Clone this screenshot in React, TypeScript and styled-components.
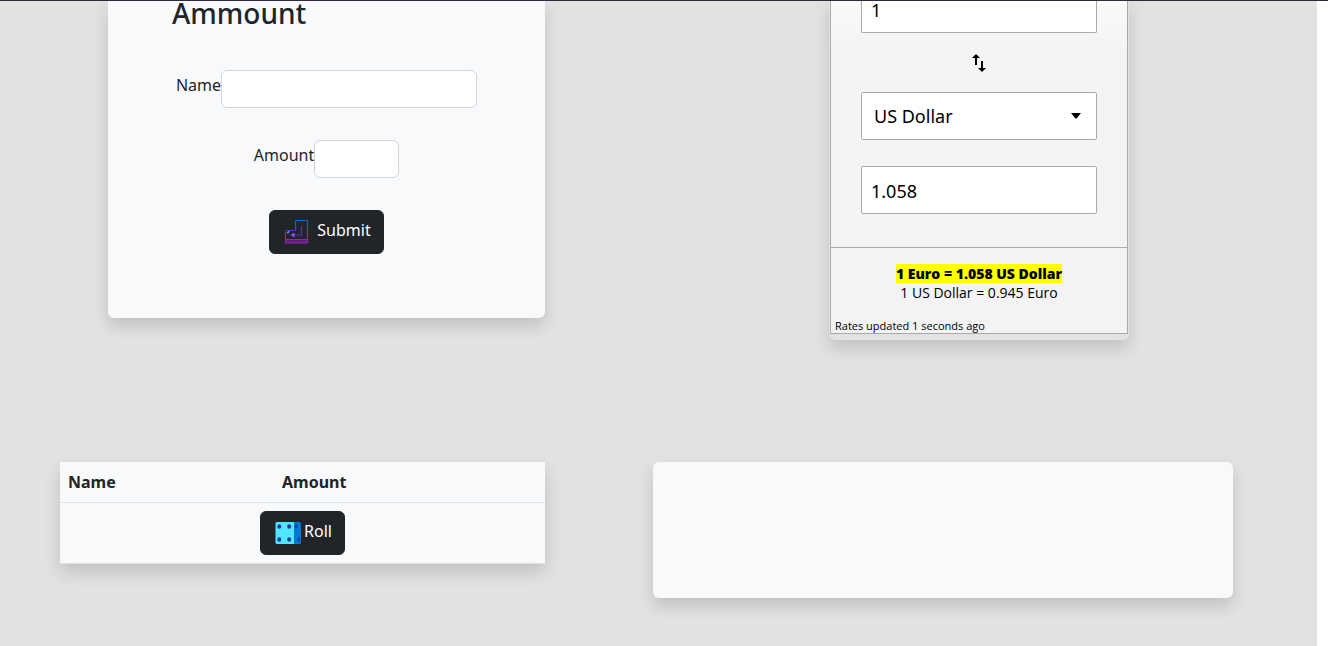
import React from "react";
import styled, { createGlobalStyle, css } from "styled-components";

const GlobalStyle = createGlobalStyle`
  *, *::before, *::after { box-sizing: border-box; }
  body {
    margin: 0;
    background: #fff;
    color: #212529;
    font-family: "Noto Sans", "Liberation Sans", sans-serif;
    font-size: 16px;
    line-height: 24px;
  }
`;

const Frame = styled.div`
  min-height: 100vh;
  border-top: 1px solid #2f2b3d;
  padding-right: 11px;
  display: flex;
`;

const Page = styled.main`
  flex: 1;
  background: #e2e2e2;
  padding: 0 84px 48px 60px;
  display: grid;
  grid-template-columns: 485fr 580fr;
  grid-template-rows: 339px auto;
  column-gap: 108px;
  row-gap: 122px;
  align-items: start;
`;

const raised = css`
  box-shadow: 0 8px 16px rgba(0, 0, 0, 0.15);
`;

const FormCard = styled.form`
  ${raised}
  margin-left: 48px;
  padding: 0 64px 64px;
  background: #f8f9fb;
  border-radius: 0 0 6px 6px;
  display: flex;
  flex-direction: column;
  align-items: center;
  gap: 32px;
`;

const Title = styled.h3`
  align-self: stretch;
  margin: 0 0 13px;
  font-size: 28px;
  font-weight: 500;
  line-height: 24px;
`;

const Field = styled.div`
  display: flex;
  align-items: flex-start;
`;

const Label = styled.label`
  line-height: 30px;
`;

const TextInput = styled.input<{ $width: number }>`
  width: ${(p) => p.$width}px;
  height: 38px;
  padding: 6px 12px;
  border: 1px solid #ced4da;
  border-radius: 6px;
  background: #fff;
  color: inherit;
  font: inherit;
`;

const DarkButton = styled.button<{ $gap: number }>`
  display: inline-flex;
  align-items: center;
  gap: ${(p) => p.$gap}px;
  padding: 6px 12px;
  border: 1px solid #212529;
  border-radius: 6px;
  background: #212529;
  color: #fff;
  font: inherit;
  cursor: pointer;

  svg { display: block; }
  span { padding-bottom: 4px; }
`;

const ConverterCard = styled.section`
  ${raised}
  width: 300px;
  margin-left: 176px;
  padding: 0 1px 6px;
  border-radius: 0 0 6px 6px;
  color: #000;
`;

const Converter = styled.div`
  border: 1px solid #aaa;
  border-top: 0;
  background: linear-gradient(#fbfafb, #f4f4f4 46px);
`;

const ConverterBody = styled.div`
  padding: 0 30px 33px;
  display: flex;
  flex-direction: column;
`;

const boxed = css`
  width: 100%;
  height: 48px;
  border: 1px solid #aaa;
  border-radius: 2px;
  background: #fff;
  color: #000;
  font: inherit;
  font-size: 18px;
`;

const ValueInput = styled.input<{ $cut?: boolean }>`
  ${boxed}
  padding: 2px 9px 0;
  ${(p) =>
    p.$cut &&
    css`
      height: 32px;
      padding: 0 9px 14px;
      border-top: 0;
      border-radius: 0 0 2px 2px;
    `}
`;

const SwapButton = styled.button`
  height: 59px;
  padding: 0;
  border: 0;
  background: none;
  display: flex;
  align-items: center;
  justify-content: center;
`;

const SelectWrap = styled.div`
  position: relative;
  margin-bottom: 26px;

  svg {
    position: absolute;
    right: 16px;
    top: 21px;
    pointer-events: none;
  }
`;

const Select = styled.select`
  ${boxed}
  display: block;
  appearance: none;
  padding: 0 32px 0 12px;
`;

const Rates = styled.footer`
  border-top: 1px solid #aaa;
  padding: 16px 4px 0;
  background: #f3f3f3;
  font-family: "Open Sans", "Noto Sans", sans-serif;
  font-size: 14px;
  line-height: 19px;
  text-align: center;
`;

const MainRate = styled.mark`
  background: #ff0;
  color: #000;
  font-weight: 800;
`;

const Rate = styled.div``;

const Updated = styled.div`
  margin-top: 16px;
  font-size: 11px;
  line-height: 15px;
  text-align: left;
`;

const Table = styled.table`
  ${raised}
  width: 100%;
  table-layout: fixed;
  border-collapse: separate;
  border-spacing: 0;
  background: #f8f9fb;

  th, td {
    padding: 8px;
    border-bottom: 1px solid #dee2e6;
    text-align: left;
  }
  th:first-child { width: 214px; }
  td { text-align: center; }
  td button { vertical-align: top; }
`;

const ResultCard = styled.section`
  ${raised}
  height: 136px;
  border-radius: 6px;
  background: #f8f9fb;
`;

const EnterKeyIcon = () => (
  <svg width="30" height="30" viewBox="0 0 30 30" fill="none" aria-hidden="true">
    <defs>
      <linearGradient id="enterKey" gradientUnits="userSpaceOnUse" x1="15" y1="3" x2="15" y2="27">
        <stop offset="0" stopColor="#1a66dc" />
        <stop offset="0.5" stopColor="#5a35b8" />
        <stop offset="1" stopColor="#a31fc0" />
      </linearGradient>
    </defs>
    <path d="M4 22.500h21.500v2.500q0 1-1 1H5q-1 0-1-1z" fill="#5c1c78" />
    <path
      d="M4.500 13.500h8q1 0 1-1v-8q0-1 1-1h10q1 0 1 1V25q0 1-1 1h-20q-1 0-1-1V14.500q0-1 1-1zM3.500 22.500h22"
      stroke="url(#enterKey)"
      strokeWidth="1.200"
    />
    <path d="M19.500 8.500v9.500h-8" stroke="#5631ac" strokeWidth="1.200" />
    <path d="M8.500 18l4-2.500v5z" fill="#9b4dff" />
    <path d="M5.300 16.300l2-2" stroke="#8a9ae0" strokeWidth="1.300" />
  </svg>
);

const DiceIcon = () => (
  <svg width="30" height="30" viewBox="0 0 30 30" aria-hidden="true">
    <path d="M18 4h8.500q1.500 0 1.500 1.500v19q0 1.500-1.500 1.500H18z" fill="#0078d4" />
    <path d="M4 4h17v22H4q-1.500 0-1.500-1.500v-19Q2.500 4 4 4z" fill="#50e6ff" />
    <g fill="#173f9b">
      <ellipse cx="6.300" cy="8.500" rx="2" ry="2.300" />
      <ellipse cx="16.200" cy="8.500" rx="2" ry="2.300" />
      <ellipse cx="6.300" cy="21.500" rx="2" ry="2.300" />
      <ellipse cx="16.200" cy="21.500" rx="2" ry="2.300" />
      <ellipse cx="23.200" cy="8.500" rx="1.200" ry="2.300" />
      <ellipse cx="25.700" cy="21.500" rx="1.300" ry="2.300" />
    </g>
  </svg>
);

const SwapIcon = () => (
  <svg width="14" height="18" viewBox="0 0 14 18" aria-hidden="true">
    <path d="M4 0L8 4H5v7H3V4H0zM10 18l-4-4h3V7h2v7h3z" fill="#000" />
  </svg>
);

const CaretIcon = () => (
  <svg width="10" height="6" viewBox="0 0 10 6" aria-hidden="true">
    <path d="M0 0h10L6 5q-1 1-2 0z" fill="#000" />
  </svg>
);

export default function App() {
  return (
    <>
      <GlobalStyle />
      <Frame>
        <Page>
          <FormCard onSubmit={(e) => e.preventDefault()}>
            <Title>Ammount</Title>
            <Field>
              <Label htmlFor="name">Name</Label>
              <TextInput id="name" type="text" $width={256} />
            </Field>
            <Field>
              <Label htmlFor="amount">Amount</Label>
              <TextInput id="amount" type="text" inputMode="numeric" $width={85} />
            </Field>
            <DarkButton type="submit" $gap={5}>
              <EnterKeyIcon />
              <span>Submit</span>
            </DarkButton>
          </FormCard>

          <ConverterCard aria-label="Currency converter">
            <Converter>
              <ConverterBody>
                <ValueInput $cut aria-label="Euro amount" defaultValue="1" />
                <SwapButton type="button" aria-label="Swap currencies">
                  <SwapIcon />
                </SwapButton>
                <SelectWrap>
                  <Select aria-label="Target currency" defaultValue="usd">
                    <option value="usd">US Dollar</option>
                  </Select>
                  <CaretIcon />
                </SelectWrap>
                <ValueInput aria-label="Converted amount" defaultValue="1.058" />
              </ConverterBody>
              <Rates>
                <MainRate>1 Euro = 1.058 US Dollar</MainRate>
                <Rate>1 US Dollar = 0.945 Euro</Rate>
                <Updated>Rates updated 1 seconds ago</Updated>
              </Rates>
            </Converter>
          </ConverterCard>

          <Table>
            <thead>
              <tr>
                <th scope="col">Name</th>
                <th scope="col">Amount</th>
              </tr>
            </thead>
            <tbody>
              <tr>
                <td colSpan={2}>
                  <DarkButton type="button" $gap={1}>
                    <DiceIcon />
                    <span>Roll</span>
                  </DarkButton>
                </td>
              </tr>
            </tbody>
          </Table>

          <ResultCard aria-label="Result" />
        </Page>
      </Frame>
    </>
  );
}
